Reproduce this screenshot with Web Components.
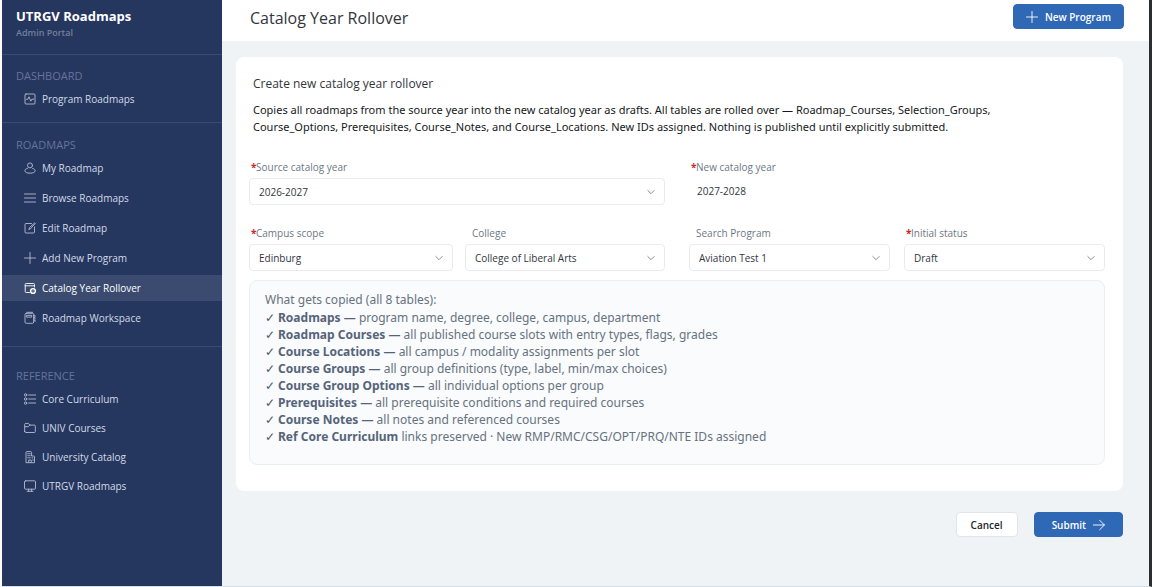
<!DOCTYPE html>
<html lang="en">
<head>
<meta charset="utf-8">
<meta name="viewport" content="width=device-width, initial-scale=1">
<title>Catalog Year Rollover</title>
<style>
  body {
    margin: 0;
    background: #fff;
    font-family: "Open Sans", "Noto Sans", sans-serif;
    font-size: 11px;
    color: #32363c;
    --navy: #25365f;
    --blue: #2f69b6;
    --canvas: #eff3f6;
    --muted: #6d7884;
  }
</style>
</head>
<body>
<app-shell>
  <side-nav slot="nav">
    <nav-group label="Dashboard" style="--top: 11px; --bottom: 10px">
      <nav-item icon="pulse">Program Roadmaps</nav-item>
    </nav-group>
    <nav-group label="Roadmaps" style="--top: 12px; --bottom: 15px">
      <nav-item icon="user">My Roadmap</nav-item>
      <nav-item icon="lines">Browse Roadmaps</nav-item>
      <nav-item icon="edit">Edit Roadmap</nav-item>
      <nav-item icon="plus">Add New Program</nav-item>
      <nav-item icon="windowAdd" current>Catalog Year Rollover</nav-item>
      <nav-item icon="notebook">Roadmap Workspace</nav-item>
    </nav-group>
    <nav-group label="Reference" style="--top: 19px; --gap: 3px">
      <nav-item icon="list">Core Curriculum</nav-item>
      <nav-item icon="folder">UNIV Courses</nav-item>
      <nav-item icon="building">University Catalog</nav-item>
      <nav-item icon="monitor">UTRGV Roadmaps</nav-item>
    </nav-group>
  </side-nav>

  <page-header slot="header" heading="Catalog Year Rollover">
    <app-button variant="primary" icon="plus">New Program</app-button>
  </page-header>

  <rollover-card>
    <span slot="title">Create new catalog year rollover</span>
    <span slot="intro">Copies all roadmaps from the source year into the new catalog year as drafts. All tables are rolled over — Roadmap_Courses, Selection_Groups, Course_Options, Prerequisites, Course_Notes, and Course_Locations. New IDs assigned. Nothing is published until explicitly submitted.</span>
    <select-field slot="source" label="Source catalog year" value="2026-2027" required></select-field>
    <static-field slot="target" label="New catalog year" value="2027-2028" required></static-field>
    <select-field slot="campus" label="Campus scope" value="Edinburg" required></select-field>
    <select-field slot="college" label="College" value="College of Liberal Arts"></select-field>
    <select-field slot="program" label="Search Program" value="Aviation Test 1"></select-field>
    <select-field slot="status" label="Initial status" value="Draft" required></select-field>
    <copy-summary slot="summary" heading="What gets copied (all 8 tables):">
      <copy-line><b>Roadmaps —</b> program name, degree, college, campus, department</copy-line>
      <copy-line><b>Roadmap Courses —</b> all published course slots with entry types, flags, grades</copy-line>
      <copy-line><b>Course Locations —</b> all campus / modality assignments per slot</copy-line>
      <copy-line><b>Course Groups —</b> all group definitions (type, label, min/max choices)</copy-line>
      <copy-line><b>Course Group Options —</b> all individual options per group</copy-line>
      <copy-line><b>Prerequisites —</b> all prerequisite conditions and required courses</copy-line>
      <copy-line><b>Course Notes —</b> all notes and referenced courses</copy-line>
      <copy-line><b>Ref Core Curriculum</b> links preserved · New RMP/RMC/CSG/OPT/PRQ/NTE IDs assigned</copy-line>
    </copy-summary>
  </rollover-card>

  <app-button slot="actions">Cancel</app-button>
  <app-button slot="actions" variant="primary" icon="arrow" trailing>Submit</app-button>
</app-shell>

<script>
const ICONS = {
  pulse: '<rect x="1" y="1" width="10" height="10" rx="1"/><path d="M2.500 6.300h1.300L5 3.800l1.800 4.400 1-2h1.800"/>',
  user: '<circle cx="6" cy="3.400" r="2.500"/><path d="M3.400 6.400C1.800 6.600.9 7.600.9 8.700.9 10.300 3 11.200 6 11.200s5.100-.9 5.100-2.500c0-1.100-.9-2.100-2.500-2.300"/>',
  lines: '<path d="M.5 2h11M.5 6h11M.5 10h11"/>',
  edit: '<path d="M7.500 1.500H2a1 1 0 0 0-1 1V10a1 1 0 0 0 1 1h7.500a1 1 0 0 0 1-1V5M5 7.200l.5-1.700L10.800.8l.5.500-4.700 5.300z"/>',
  plus: '<path d="M6 .5v11M.5 6h11"/>',
  windowAdd: '<path d="M5.500 10.500H2.200a1 1 0 0 1-1-1v-7a1 1 0 0 1 1-1h7.300a1 1 0 0 1 1 1V5M1.200 3.800h9.300"/><circle cx="9" cy="9" r="3.100" fill="currentColor" stroke="none"/><path d="M9 7.500v3M7.500 9h3" stroke="#25365f"/>',
  notebook: '<rect x="1" y="1.300" width="8.700" height="10" rx="1.300"/><path d="M3 3.300h4.700v1.800H3zM3 .3h5.500M9.700 3.300h1.300v1.500M9.700 5.600h1.300v1.500M9.700 8h1.300v1.500"/>',
  list: '<circle cx="1.600" cy="1.900" r="1.200"/><circle cx="1.600" cy="6" r="1.200"/><circle cx="1.600" cy="10.100" r="1.200"/><path d="M4.700 2h7M4.700 6h7M4.700 10h7"/>',
  folder: '<path d="M.7 9.500V2.400a1 1 0 0 1 1-1h2.700l1.500 1.700h4.400a1 1 0 0 1 1 1v5.400a1 1 0 0 1-1 1H1.700a1 1 0 0 1-1-1zM.7 4.700h3.500l1.700-1.600"/>',
  building: '<path d="M2 11.300V1.600a1 1 0 0 1 1-1h3.600a1 1 0 0 1 1 1V5h2.100a.8.800 0 0 1 .8.800v5.500zM4.700 11.300V9h2.500v2.300M3.700 2.700h.8M5.500 2.700h.8M3.700 4.700h.8M5.500 4.700h.8M3.700 6.800h.8M5.500 6.800h.8M8 6.900h.8M8.600 9h.8"/>',
  monitor: '<rect x=".5" y=".8" width="11" height="8.400" rx="1.100"/><path d="M4.600 9.200v2M7.600 9.200v2M3.200 11.300h5.800"/>',
  arrow: '<path d="M.4 6h11M6.600 1.200 11.400 6l-4.800 4.800"/>',
  chevron: '<path d="M2.800 4.500 6 7.700l3.200-3.200"/>'
};
const svg = (name) =>
  `<svg width="12" height="12" viewBox="0 0 12 12" fill="none" stroke="currentColor" stroke-width=".9" stroke-linecap="round" stroke-linejoin="round" overflow="visible" aria-hidden="true">${ICONS[name]}</svg>`;

class Base extends HTMLElement {
  connectedCallback() {
    if (this.shadowRoot) return;
    this.attachShadow({ mode: "open" }).innerHTML = this.template();
  }
  attr(name) { return this.getAttribute(name) || ""; }
}

customElements.define("app-shell", class extends Base {
  template() { return `
    <style>
      :host { display: grid; grid-template-columns: 220px 1fr; min-height: 100vh; box-sizing: border-box;
              margin: 0 2px; border-right: 3px solid #2b2e31; border-bottom: 1px solid #d5dfe8; background: var(--canvas); }
      .content { display: flex; flex-direction: column; min-width: 0; }
      main { padding: 16px 26px 0 14px; }
      .actions { display: flex; justify-content: flex-end; gap: 16px; padding: 21px 0; }
    </style>
    <slot name="nav"></slot>
    <div class="content">
      <slot name="header"></slot>
      <main><slot></slot><div class="actions"><slot name="actions"></slot></div></main>
    </div>`; }
});

customElements.define("side-nav", class extends Base {
  template() { return `
    <style>
      :host { display: block; background: var(--navy); color: #fff; }
      header { padding: 6px 14px 15px; border-bottom: 1px solid #3a4a70; }
      strong { display: block; font-size: 13px; line-height: 20px; font-weight: 700; }
      small { display: block; font-size: 9px; line-height: 13px; font-weight: 600; color: #74809b; }
    </style>
    <header><strong>UTRGV Roadmaps</strong><small>Admin Portal</small></header>
    <nav><slot></slot></nav>`; }
});

customElements.define("nav-group", class extends Base {
  template() { return `
    <style>
      :host { display: block; padding: var(--top) 0 var(--bottom, 0); border-bottom: 1px solid #3a4a70; }
      :host(:last-of-type) { border-bottom: 0; }
      h2 { margin: 0; padding-left: 14px; font-size: 11px; line-height: 20px; font-weight: 400; color: #66749a; text-transform: uppercase; }
      .items { display: grid; gap: var(--gap, 4px); }
    </style>
    <h2>${this.attr("label")}</h2><div class="items"><slot></slot></div>`; }
});

customElements.define("nav-item", class extends Base {
  template() { return `
    <style>
      :host { display: block; }
      a { display: flex; align-items: center; gap: 6px; height: 26px; padding-left: 22px; font-size: 10px; color: #d3dae7; text-decoration: none; }
      svg { color: #b3bed2; }
      :host([current]) a { background: #3b4b70; color: #fff; }
      :host([current]) svg { color: #fff; }
    </style>
    <a href="#" ${this.hasAttribute("current") ? 'aria-current="page"' : ""}>${svg(this.attr("icon"))}<span><slot></slot></span></a>`; }
});

customElements.define("page-header", class extends Base {
  template() { return `
    <style>
      :host { display: flex; justify-content: space-between; align-items: flex-start; height: 41px; box-sizing: border-box; padding: 4px 25px 0 28px; background: #fff; }
      h1 { margin: 0; font-size: 16px; line-height: 28px; font-weight: 400; }
    </style>
    <h1>${this.attr("heading")}</h1><slot></slot>`; }
});

customElements.define("app-button", class extends Base {
  template() {
    const icon = this.attr("icon") ? svg(this.attr("icon")) : "";
    const trailing = this.hasAttribute("trailing");
    return `
    <style>
      :host { display: block; }
      button { display: flex; align-items: center; justify-content: center; gap: 7px; height: 25px; padding: 0 14px; box-sizing: border-box;
               font: 600 10px "Open Sans", "Noto Sans", sans-serif; color: #22262b; background: #fff; border: 1px solid #dfe5ea; border-radius: 4px; }
      :host([variant="primary"]) button { padding: 0 12px; color: #fff; background: var(--blue); border-color: var(--blue); }
      :host([variant="primary"][trailing]) button { padding: 0 17px; }
    </style>
    <button type="button">${trailing ? "" : icon}<span><slot></slot></span>${trailing ? icon : ""}</button>`; }
});

const FIELD_CSS = `
  :host { display: block; min-width: 0; }
  label { display: block; padding-left: 2px; font-size: 10px; line-height: 14px; color: var(--muted); }
  i { display: inline-block; width: 5px; font-style: normal; font-weight: 700; color: #c42b2b; }`;

customElements.define("select-field", class extends Base {
  template() { return `
    <style>${FIELD_CSS}
      .box { display: grid; align-items: center; margin-top: 4px; }
      select { grid-area: 1 / 1; appearance: none; width: 100%; height: 27px; box-sizing: border-box; padding: 0 28px 0 9px;
               font: 400 10px "Open Sans", "Noto Sans", sans-serif; color: #32363c; background: #fff; border: 1px solid #e8ecef; border-radius: 4px; }
      svg { grid-area: 1 / 1; justify-self: end; margin-right: 8px; color: #7b8087; pointer-events: none; }
    </style>
    <label for="f"><i>${this.hasAttribute("required") ? "*" : ""}</i>${this.attr("label")}</label>
    <div class="box"><select id="f"><option>${this.attr("value")}</option></select>${svg("chevron")}</div>`; }
});

customElements.define("static-field", class extends Base {
  template() { return `
    <style>${FIELD_CSS}
      output { display: block; margin-top: 4px; padding-left: 8px; font-size: 10px; line-height: 27px; }
    </style>
    <label for="f"><i>${this.hasAttribute("required") ? "*" : ""}</i>${this.attr("label")}</label>
    <output id="f">${this.attr("value")}</output>`; }
});

customElements.define("rollover-card", class extends Base {
  template() { return `
    <style>
      :host { display: block; padding: 16px 18px 26px 13px; background: #fff; border-radius: 8px; }
      h2 { margin: 0 4px; font-size: 12px; line-height: 21px; font-weight: 400; }
      p { margin: 7px 4px 0; max-width: 768px; font-family: "Noto Sans", "Open Sans", sans-serif; font-size: 11px; line-height: 17px; color: #16191d; }
      .row, .pair { display: grid; }
      .row { grid-template-columns: 1fr 1fr; column-gap: 24px; }
      .fields { display: grid; row-gap: 21px; margin-top: 25px; }
      .left { grid-template-columns: 204fr 200fr; column-gap: 12px; }
      .right { grid-template-columns: 1fr 1fr; column-gap: 14px; }
      .summary { margin-top: 9px; }
    </style>
    <h2><slot name="title"></slot></h2>
    <p><slot name="intro"></slot></p>
    <form class="fields">
      <div class="row"><slot name="source"></slot><slot name="target"></slot></div>
      <div class="row">
        <div class="pair left"><slot name="campus"></slot><slot name="college"></slot></div>
        <div class="pair right"><slot name="program"></slot><slot name="status"></slot></div>
      </div>
    </form>
    <div class="summary"><slot name="summary"></slot></div>`; }
});

customElements.define("copy-summary", class extends Base {
  template() { return `
    <style>
      :host { display: block; padding: 10px 16px 19px 15px; font-family: "Noto Sans", "Open Sans", sans-serif; font-size: 12px; line-height: 17px; color: #67727f;
              background: #f9fbfc; border: 1px solid #eaeff3; border-radius: 8px; }
      p { margin: 0 0 1px; }
    </style>
    <p>${this.attr("heading")}</p><slot></slot>`; }
});

customElements.define("copy-line", class extends Base {
  template() { return `
    <style>
      :host { display: flex; }
      .check { flex: none; width: 13px; color: #4d5a6b; }
      ::slotted(b) { font-weight: 700; color: #56647a; }
    </style>
    <span class="check">✓</span><span><slot></slot></span>`; }
});
</script>
</body>
</html>
